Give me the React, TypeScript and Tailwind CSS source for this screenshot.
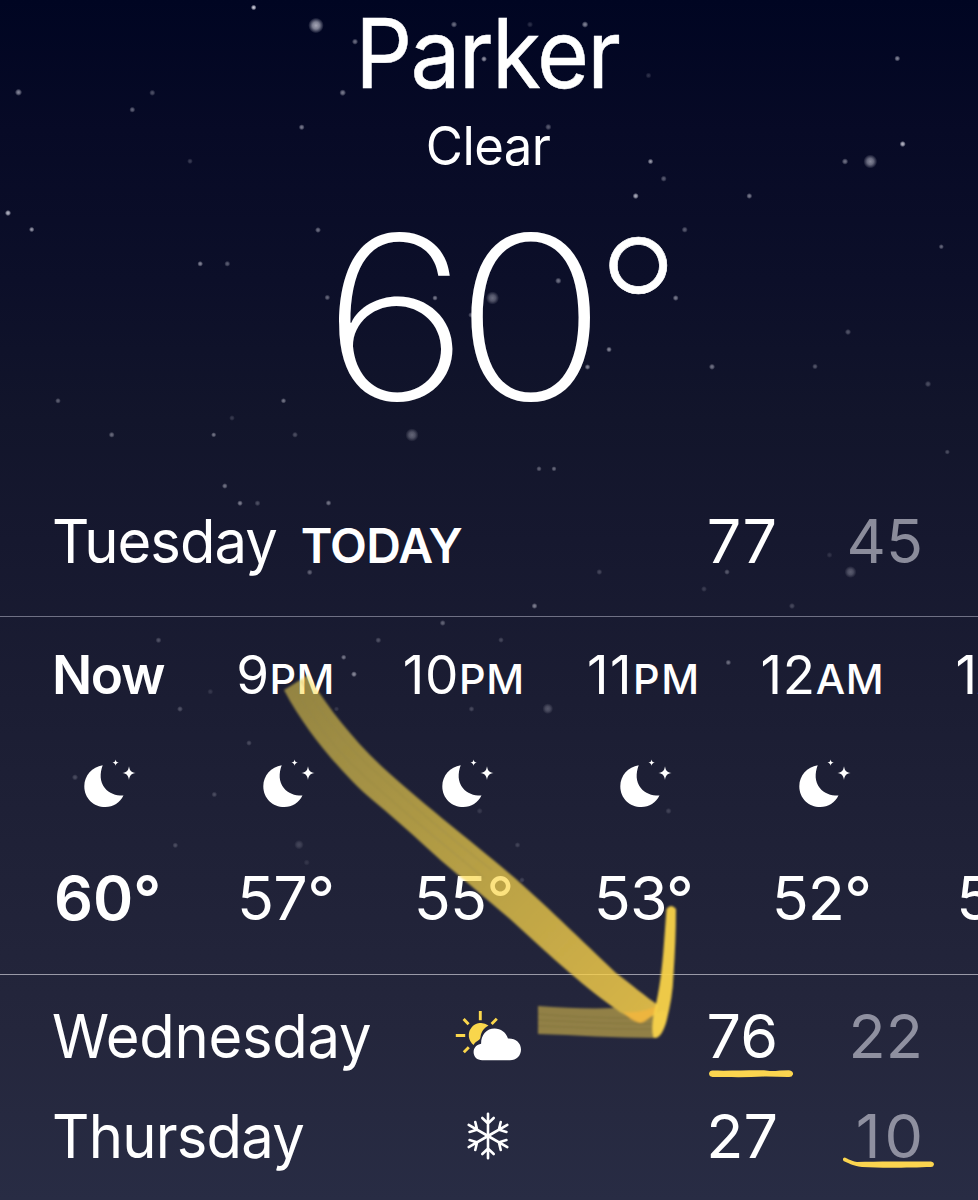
import React from "react";

type Star = [x: number, y: number, r: number, opacity: number];

const stars: Star[] = [
  [253.7, 7.5, 2.4, 0.95], [316, 25.5, 6.5, 0.75], [18.5, 92.3, 3, 0.6], [152.3, 92.8, 2.6, 0.35],
  [132.3, 109.7, 2.5, 0.45], [301.7, 127.2, 2.5, 0.55], [190, 161.2, 2.4, 0.25], [8, 213, 2.6, 0.85],
  [31.7, 229.5, 2.3, 0.7], [318, 230, 2.5, 0.5], [200.2, 263.8, 2.4, 0.6], [227.3, 263.8, 2.5, 0.4],
  [327.3, 297.5, 2.4, 0.45], [58, 400.8, 2.4, 0.4], [283.5, 400.8, 2.3, 0.5], [232, 418, 2.4, 0.2],
  [111.7, 434.8, 2.5, 0.45], [213.7, 434.8, 2.2, 0.5], [295, 434.8, 2.5, 0.3], [224.8, 486, 2.4, 0.5],
  [454, 24.5, 2.7, 0.5], [530, 24.5, 2.6, 0.2], [585, 24.5, 2.8, 0.6], [355, 41.7, 2.6, 0.5],
  [484, 59, 2.5, 0.7], [342.7, 92.7, 2.8, 0.55], [548.3, 127, 2.7, 0.4], [648.5, 75.5, 2.5, 0.2],
  [650.5, 161.5, 2.4, 0.7], [663.7, 178.7, 2.6, 0.4], [635.7, 196, 2.6, 0.8], [558.3, 280.8, 2.7, 0.5],
  [492.5, 298, 5.5, 0.45], [435, 298, 2.3, 0.55], [471, 315, 2.4, 0.4], [609, 349.5, 2.4, 0.6],
  [587.5, 367, 2.4, 0.6], [675.7, 298, 2.5, 0.55], [684.7, 229.7, 2.6, 0.4], [749.3, 196, 2.5, 0.55],
  [897.3, 58.5, 2.5, 0.6], [902.7, 144, 2.6, 0.85], [845, 161.5, 2.7, 0.5], [870.3, 161.5, 5.8, 0.6],
  [941.3, 246.7, 2.2, 0.45], [848, 332, 2.6, 0.35], [712, 366.8, 2.6, 0.5], [815, 366.5, 2.4, 0.35],
  [928, 384, 2.7, 0.3], [947.3, 452, 2.2, 0.3], [412, 435, 5.5, 0.4], [539, 468.8, 2.3, 0.4],
  [554, 468.8, 2.2, 0.45], [240, 503.2, 2.4, 0.55], [257.5, 503.2, 2.5, 0.3], [328.5, 503, 2.4, 0.5],
  [309.7, 572.3, 2.5, 0.4], [131, 537, 2.6, 0.25], [442.7, 623, 2.5, 0.4], [158.5, 640.2, 2.5, 0.3],
  [378.3, 640.2, 2.5, 0.3], [343.7, 657.3, 2.3, 0.5], [354, 674.2, 2.5, 0.6], [210.3, 691.7, 2.5, 0.15],
  [180, 709, 2.5, 0.3], [336.5, 709, 2.3, 0.15], [471.5, 709, 2.4, 0.25], [599.3, 572, 2.5, 0.25],
  [727, 572, 2.4, 0.35], [850.5, 572, 5, 0.35], [829.5, 555, 2.5, 0.15], [704, 589, 2.5, 0.2],
  [534.5, 606, 2.5, 0.55], [792, 606, 2.6, 0.25], [501, 640, 2.4, 0.25], [728.3, 662.5, 2.4, 0.45],
  [547.8, 708.7, 4.5, 0.3], [249, 743, 2.4, 0.25], [75, 777.3, 2.6, 0.25], [214.3, 794.5, 2.4, 0.25],
  [175.3, 845.3, 2.4, 0.25], [299, 844.7, 4, 0.2], [306.7, 862.5, 2.6, 0.12], [479.7, 811, 2.6, 0.15],
  [668.5, 811, 2.6, 0.2], [517.5, 845, 2.4, 0.2], [522, 880, 2.4, 0.18],
];

function Sky() {
  return (
    <svg className="pointer-events-none absolute inset-0" width="978" height="1200" viewBox="0 0 978 1200" aria-hidden="true">
      <defs>
        <radialGradient id="star">
          <stop offset="0" stopColor="#dcdce8" />
          <stop offset="0.45" stopColor="#dcdce8" stopOpacity="0.75" />
          <stop offset="1" stopColor="#dcdce8" stopOpacity="0" />
        </radialGradient>
      </defs>
      {stars.map(([x, y, r, opacity]) => (
        <circle key={`${x}-${y}`} cx={x} cy={y} r={r * 1.2} fill="url(#star)" opacity={opacity} />
      ))}
    </svg>
  );
}

function MoonIcon() {
  return (
    <svg width="52" height="48" viewBox="0 0 52 48" fill="#fff" overflow="visible" aria-hidden="true">
      <path d="M18.700 5.200C15.800 13 15.600 21.500 20.800 28c4.600 5.700 11.400 7.800 18.700 7.600C36 42.800 29.200 47 21.400 47 9.600 47 0.300 38.200 0.300 26.200 0.300 15.500 8.200 6.700 18.700 5.200Z" />
      <path d="M45 6.200c.8 4.600 2.100 6 6.600 6.900-4.500.9-5.800 2.300-6.600 6.900-.8-4.600-2.100-6-6.600-6.900 4.500-.9 5.800-2.300 6.600-6.900Z" />
      <path d="M31.600-.4c.4 2 1 2.700 3.100 3.100-2.100.4-2.700 1.100-3.100 3.100-.4-2-1-2.700-3.100-3.100 2.100-.4 2.700-1.100 3.100-3.100Z" />
    </svg>
  );
}

function PartlySunnyIcon() {
  return (
    <svg width="67" height="52" viewBox="0 0 67 52" aria-hidden="true">
      <g stroke="#fbd74c" strokeWidth="2.900">
        <path d="M25.300 1v9.300M.8 25.500h9.400M8.600 9l5 5.300M41.800 8.800l-5.200 5.200M13.800 37.200l-5 5" />
      </g>
      <path fill="#f9d64c" d="M18.500 34.900A11.500 11.500 0 1 1 33.500 15.600C29.200 18 26.200 21.500 25.500 27 25.300 31 21 30.500 18.500 34.900Z" />
      <path fill="#fff" d="M27.200 50.200C22 50.200 18.600 46.600 18.600 42.200c0-4.400 3.200-7.700 7.500-8.400C26 25 31.500 18.600 39.600 18.600c6.200 0 11.300 3.800 13.400 9.800C60.400 28 66 32.700 66 39.400c0 6.200-4.700 10.800-11 10.800Z" />
    </svg>
  );
}

function SnowIcon() {
  return (
    <svg width="44" height="48" viewBox="-22 -24 44 48" fill="none" stroke="#fff" strokeWidth="2.600" strokeLinecap="round" aria-hidden="true">
      {[0, 60, 120, 180, 240, 300].map((angle) => (
        <path key={angle} transform={`rotate(${angle})`} d="M0 0V-22.300M-5.700 -18L0 -12.600L5.700 -18" />
      ))}
    </svg>
  );
}

interface Hour {
  hour: string;
  suffix?: string;
  temp: string;
  labelClass: string;
  tempClass: string;
}

const hours: Hour[] = [
  { hour: "Now", temp: "60°", labelClass: "font-semibold tracking-[-1.4px]", tempClass: "font-semibold pr-[1px]" },
  { hour: "9", suffix: "PM", temp: "57°", labelClass: "tracking-[0.4px] pr-[2px]", tempClass: "tracking-[-0.7px] pr-[2px]" },
  { hour: "10", suffix: "PM", temp: "55°", labelClass: "tracking-[0.6px] pr-[3px]", tempClass: "tracking-[-0.7px] pr-[3px]" },
  { hour: "11", suffix: "PM", temp: "53°", labelClass: "tracking-[1.5px]", tempClass: "tracking-[-0.8px] pr-[1px]" },
  { hour: "12", suffix: "AM", temp: "52°", labelClass: "tracking-[0.6px]", tempClass: "tracking-[-0.9px] pr-[2px]" },
  { hour: "1", suffix: "AM", temp: "50°", labelClass: "pr-[16px]", tempClass: "" },
];

function HourColumn({ hour, suffix, temp, labelClass, tempClass }: Hour) {
  return (
    <div className="flex w-[178.6px] shrink-0 flex-col items-center last:ml-[7px]">
      <div className={`flex h-[118px] items-center text-[53px] ${labelClass}`}>
        <span className="whitespace-nowrap">
          {hour}
          {suffix && <span className="text-[41.5px] font-medium">{suffix}</span>}
        </span>
      </div>
      <div className="flex h-[100px] items-center pl-[5px]">
        <MoonIcon />
      </div>
      <div className={`flex h-[128px] items-center text-[61px] ${tempClass}`}>{temp}</div>
    </div>
  );
}

interface DayRowProps {
  day: string;
  high: string;
  low: string;
  icon: React.ReactNode;
  dayClass: string;
  lowClass?: string;
}

function DayRow({ day, high, low, icon, dayClass, lowClass = "" }: DayRowProps) {
  return (
    <div className="flex h-[100px] items-center pr-[55px] pl-[52px] text-[61px]">
      <div className={`w-[366px] origin-left scale-x-[0.95] ${dayClass}`}>{day}</div>
      <div className="flex w-[140px] justify-center">{icon}</div>
      <div className="w-[220px] text-right">{high}</div>
      <div className={`flex-1 text-right text-[#8f90a0] ${lowClass}`}>{low}</div>
    </div>
  );
}

function Markup() {
  return (
    <svg className="pointer-events-none absolute inset-0" width="978" height="1200" viewBox="0 0 978 1200" fill="none" aria-hidden="true">
      <defs>
        <linearGradient id="shaft" gradientUnits="userSpaceOnUse" x1="295" y1="680" x2="650" y2="1015">
          <stop offset="0" stopColor="#fbdc50" stopOpacity="0.54" />
          <stop offset="0.5" stopColor="#fbd84c" stopOpacity="0.68" />
          <stop offset="1" stopColor="#f9d04a" stopOpacity="0.84" />
        </linearGradient>
        <filter id="soft" x="-5%" y="-5%" width="110%" height="110%">
          <feGaussianBlur stdDeviation="0.8" />
        </filter>
      </defs>
      <g filter="url(#soft)">
        <path fill="#e8c84c" fillOpacity="0.56" d="M538 1006C565 1008 592 1009 614 1008L640 1023L662 1010L668 1012Q664 1037 656 1038C615 1038 575 1035 538 1034Z" />
        <path stroke="#5f5838" strokeOpacity="0.25" strokeWidth="1.500" d="M538 1014C570 1017 600 1018 630 1018M538 1020C580 1022 615 1024 652 1024M538 1026C580 1027 610 1030 652 1029" />
        <path
          fill="url(#shaft)"
          d="M284 690L308 675C321 697 342 726 370 755C392 777 418 798 443 819C468 839 490 857 510 874C535 895 570 929 616 973C632 985 645 996 658 1005L656 1014L640 1023L620 1012C600 998 586 987 570 973C550 956 530 937 510 919C492 904 475 889 457 874C436 857 417 838 397 821C382 807 366 796 353 782C325 753 302 724 284 690Z"
        />
        <path
          stroke="#8d8045"
          strokeOpacity="0.2"
          strokeWidth="2"
          d="M293 685C314 723 336 750 362 774C402 811 446 846 484 878M301 680C321 714 340 738 367 764C408 801 446 835 492 870"
        />
        <path fill="#f7b53c" fillOpacity="0.7" d="M623 1012C638 1013 649 1010 658 1005L656 1013C650 1016 645 1024 640 1023C633 1022 629 1018 623 1012Z" />
        <path
          fill="#f8d24a"
          fillOpacity="0.95"
          d="M666.500 909Q671 903 676 909C676 931 675 953 673.500 975C673 992 670 1008 666 1023C663 1031 660 1038 654 1038C651 1034 652 1018 656 1004C661 982 663 957 664.500 936Z"
        />
      </g>
      <path fill="#fbd54f" d="M712.500 1070.500C730 1071 748 1070 764 1070.300C770 1071.500 774 1071.200 780 1070.400L789 1070.200Q793.500 1071 793 1074.500Q792 1077.500 788 1077L766 1076.500C748 1077.500 728 1077 712.500 1077Q709 1076.500 709 1073.500Q709.500 1070.500 712.500 1070.500Z" />
      <path fill="#fbd54f" d="M844.500 1157.500C847 1158 849.500 1160.600 857 1162C877 1161 905 1161.500 931 1161.500Q934 1162 934 1164.500Q933.500 1167 931 1167C912 1167.500 885 1168.500 862 1167C852 1166 848 1162.500 843.500 1161Q842 1158 844.500 1157.500Z" />
    </svg>
  );
}

export default function App() {
  return (
    <main className="relative h-[1200px] w-[978px] overflow-hidden bg-[linear-gradient(to_bottom,#000522_0px,#070a26_130px,#0c0f29_280px,#12152b_420px,#16182f_540px,#1b1d33_700px,#202238_880px,#24263c_1030px,#282c44_1200px)] font-['Inter',sans-serif] leading-none text-white">
      <Sky />
      <div className="relative flex flex-col">
        <h1 className="flex h-[106px] scale-x-[0.93] items-center justify-center pr-[4px] text-[96px] font-normal tracking-[-2px] [-webkit-text-stroke:0.5px_#fff]">Parker</h1>
        <p className="flex h-[80px] scale-x-[0.96] items-center justify-center pr-[2px] text-[53px] tracking-[-0.6px]">Clear</p>
        <div className="flex h-[262px] items-center pl-[322px] font-extralight">
          <span className="w-[274px] origin-left scale-x-[1.11] text-[228px] tracking-[-13.700px]">60</span>
          <span className="pb-[21px] text-[186px] [-webkit-text-stroke:0.7px_#fff]">°</span>
        </div>
        <div className="flex h-[168px] items-center pt-[18px] pr-[55px] pl-[52px] text-[61px]">
          <div className="flex flex-1 items-baseline gap-[12px]">
            <span className="origin-left scale-x-[0.95] tracking-[-1px]">Tuesday</span>
            <span className="text-[48px] font-semibold tracking-[-0.8px]">TODAY</span>
          </div>
          <div className="w-[145px] text-right">77</div>
          <div className="w-[146px] text-right text-[#8b8c9b]">45</div>
        </div>
        <div className="flex h-[359px] overflow-hidden border-b border-[#9a9aa8] pl-[18.700px] shadow-[inset_0_1px_0_#6f7084]">
          {hours.map((h) => (
            <HourColumn key={h.hour} {...h} />
          ))}
        </div>
        <div className="flex flex-col pt-[11px]">
          <DayRow day="Wednesday" high="76" low="22" icon={<PartlySunnyIcon />} dayClass="tracking-[-0.3px]" />
          <DayRow day="Thursday" high="27" low="10" icon={<SnowIcon />} dayClass="tracking-[-0.8px]" lowClass="tracking-[4px] mr-[-4px]" />
        </div>
      </div>
      <Markup />
    </main>
  );
}
